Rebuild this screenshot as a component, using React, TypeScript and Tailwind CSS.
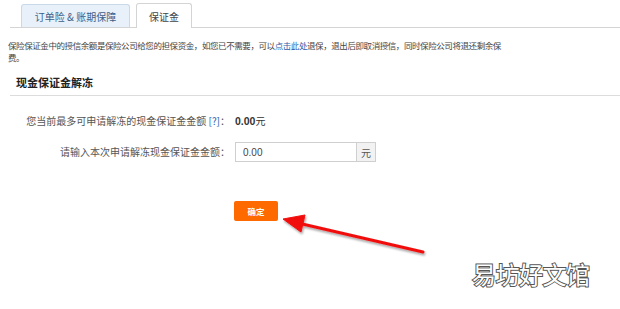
const App = () => {
  return (
    <div className="relative w-[620px] h-[309px] overflow-hidden bg-white text-[#333] font-['Noto_Sans_CJK_SC',sans-serif]">
      {/* tabs */}
      <div className="ml-[10px] pl-[11px] pt-[3px] flex items-end gap-[6px] border-b border-[#d4d4d4]">
        <div className="w-[109px] h-[23px] flex items-center justify-center bg-[#e8f1fa] border border-b-0 border-[#c9d9ea] rounded-t-[3px] text-[10px] text-[#3a5f8a]">
          订单险 &amp; 账期保障
        </div>
        <div className="w-[56px] h-[25px] -mb-px flex items-center justify-center bg-white border border-b-0 border-[#d4d4d4] rounded-t-[3px] text-[10px] text-[#444]">
          保证金
        </div>
      </div>

      {/* description */}
      <p className="mt-[11px] ml-[8px] whitespace-nowrap text-[8.5px] tracking-[-0.42px] leading-[12px] text-[#444]">
        保险保证金中的授信余额是保险公司给您的担保资金，如您已不需要，可以<span className="text-[#2a5db0]">点击此处</span>退保，退出后即取消授信，同时保险公司将退还剩余保
        <br />
        费。
      </p>

      {/* section */}
      <div className="ml-[10px]">
        <h2 className="mt-[12px] pl-[6px] pb-[6px] text-[11px] leading-[14px] font-bold text-[#222] border-b border-[#dcdcdc]">
          现金保证金解冻
        </h2>
      </div>

      <div className="mt-[18px] grid grid-cols-[230px_1fr] gap-x-[5px] gap-y-[14px] items-center text-[10px] text-[#555]">
        <div className="text-right leading-[14px]">
          您当前最多可申请解冻的现金保证金金额 <span className="text-[#2a5db0]">[?]</span>：
        </div>
        <div className="leading-[14px] text-[#333]">
          <span className="font-bold text-[10.5px] font-['Liberation_Sans',sans-serif]">0.00</span>元
        </div>

        <div className="text-right leading-[14px]">请输入本次申请解冻现金保证金金额：</div>
        <div className="flex h-[20px]">
          <div className="w-[122px] h-full border border-[#cfcfcf] flex items-center pl-[7px] text-[10px] text-[#444] font-['Liberation_Sans',sans-serif]">
            0.00
          </div>
          <div className="w-[19px] h-full border border-l-0 border-[#cfcfcf] bg-[#f2f2f2] flex items-center justify-center text-[10px] text-[#555]">
            元
          </div>
        </div>
      </div>

      <div className="mt-[39px] ml-[234px]">
        <button className="w-[44px] h-[20px] bg-[#ff6a00] rounded-[2px] text-white text-[8.5px] font-bold flex items-center justify-center">
          确定
        </button>
      </div>

      {/* annotation arrow */}
      <svg className="absolute inset-0 pointer-events-none" width="620" height="309">
        <defs>
          <filter id="sh" x="-20%" y="-50%" width="140%" height="200%">
            <feDropShadow dx="1" dy="2" stdDeviation="1.2" floodColor="#000" floodOpacity="0.35" />
          </filter>
        </defs>
        <g filter="url(#sh)" fill="#f20d0d" stroke="#f20d0d">
          <line x1="423" y1="252" x2="298" y2="223" strokeWidth="3" strokeLinecap="round" />
          <polygon points="283,219 305,215 301,232" strokeWidth="1" strokeLinejoin="round" />
        </g>
      </svg>

      {/* watermark */}
      <div className="absolute left-[472px] top-[259px] text-[24px] leading-[30px] text-white [-webkit-text-stroke:2px_#555] [paint-order:stroke_fill] tracking-[-0.5px]">
        易坊好文馆
      </div>
    </div>
  );
};

export default App;
